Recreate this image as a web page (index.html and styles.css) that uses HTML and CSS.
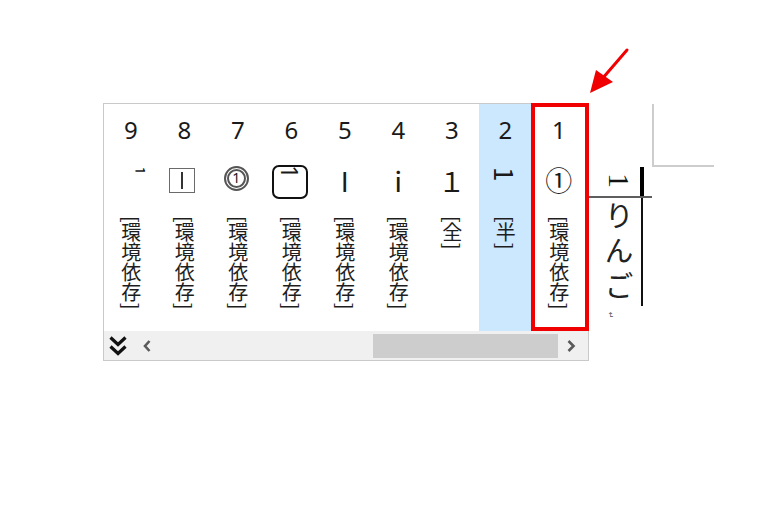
FILE: index.html
```html
<!DOCTYPE html>
<html lang="ja">
<head>
<meta charset="utf-8">
<title>IME候補ウィンドウ</title>
<link rel="stylesheet" href="styles.css">
</head>
<body>
<div class="screen">
  <div class="ime">
    <div class="cands">
      <div class="cand">
        <div class="num">9</div>
        <div class="glyph"><span class="rot g-sup">¹</span></div>
        <div class="note">[環境依存]</div>
      </div>
      <div class="cand">
        <div class="num">8</div>
        <div class="glyph"><span class="g-box"><span class="g-box-bar"></span></span></div>
        <div class="note">[環境依存]</div>
      </div>
      <div class="cand">
        <div class="num">7</div>
        <div class="glyph"><span class="g-dcircle">1</span></div>
        <div class="note">[環境依存]</div>
      </div>
      <div class="cand">
        <div class="num">6</div>
        <div class="glyph"><span class="g-key"><span class="rot g-key-one">1</span></span></div>
        <div class="note">[環境依存]</div>
      </div>
      <div class="cand">
        <div class="num">5</div>
        <div class="glyph"><span class="g-roman">Ⅰ</span></div>
        <div class="note">[環境依存]</div>
      </div>
      <div class="cand">
        <div class="num">4</div>
        <div class="glyph"><span class="g-roman">ⅰ</span></div>
        <div class="note">[環境依存]</div>
      </div>
      <div class="cand">
        <div class="num">3</div>
        <div class="glyph"><span class="g-full">１</span></div>
        <div class="note">[全]</div>
      </div>
      <div class="cand sel">
        <div class="num">2</div>
        <div class="glyph"><span class="rot g-half">1</span></div>
        <div class="note">[半]</div>
      </div>
      <div class="cand">
        <div class="num">1</div>
        <div class="glyph"><span class="g-circle">①</span></div>
        <div class="note">[環境依存]</div>
      </div>
    </div>
    <div class="scroll">
      <svg class="dbl" viewBox="0 0 20 22" width="20" height="22" aria-hidden="true">
        <path d="M2.5 2.5 L10 9.5 L17.5 2.5" fill="none" stroke="#111" stroke-width="3.2"/>
        <path d="M2.5 11.5 L10 18.5 L17.5 11.5" fill="none" stroke="#111" stroke-width="3.2"/>
      </svg>
      <svg class="arr-l" viewBox="0 0 8 12" width="8" height="12" aria-hidden="true">
        <path d="M6.5 1 L2 6 L6.5 11" fill="none" stroke="#5a5a5a" stroke-width="2.6"/>
      </svg>
      <div class="track"><div class="thumb"></div></div>
      <svg class="arr-r" viewBox="0 0 10 12" width="10" height="12" aria-hidden="true">
        <path d="M2.5 1 L7.5 6 L2.5 11" fill="none" stroke="#5a5a5a" stroke-width="2.6"/>
      </svg>
    </div>
    <div class="redbox"></div>
  </div>

  <div class="doc">
    <div class="corner"></div>
    <div class="head">
      <span class="one">1</span>
      <span class="caret"></span>
    </div>
    <div class="rule"></div>
    <div class="body">
      <span class="ringo">りんご</span>
      <span class="uline"></span>
    </div>
    <div class="para">↵</div>
  </div>

  <svg class="arrow" viewBox="0 0 50 55" width="50" height="55" aria-hidden="true">
    <line x1="42" y1="5" x2="17" y2="34" stroke="#f00000" stroke-width="3" stroke-linecap="round"/>
    <polygon points="5,48 11,25 28,37" fill="#f00000"/>
  </svg>
</div>
</body>
</html>
```
FILE: styles.css
```css
html, body {
  margin: 0;
  padding: 0;
  background: #fff;
}

body {
  font-family: "Noto Sans", "Noto Sans CJK JP", sans-serif;
  color: #1a1a1a;
}

.screen {
  position: relative;
  width: 779px;
  height: 518px;
  box-sizing: border-box;
  padding: 103px 0 0 103px;
  display: flex;
  align-items: flex-start;
  overflow: hidden;
}

/* ---------- candidate window ---------- */
.ime {
  position: relative;
  width: 486px;
  height: 258px;
  box-sizing: border-box;
  border: 1px solid #c9c9c9;
  background: #fff;
  display: flex;
  flex-direction: column;
  flex: none;
}

.cands {
  display: grid;
  grid-template-columns: repeat(9, 53.5px);
  height: 227px;
}

.cand {
  display: flex;
  flex-direction: column;
  align-items: center;
}

.cand.sel {
  background: #cce8ff;
}

.num {
  margin-top: 14px;
  height: 24px;
  line-height: 24px;
  font-size: 24px;
  color: #1a1a1a;
}

.glyph {
  margin-top: 15px;
  height: 44px;
  width: 100%;
  display: flex;
  align-items: center;
  justify-content: center;
  font-family: "Noto Sans CJK JP", sans-serif;
  font-size: 27px;
  line-height: 1;
  color: #1a1a1a;
}

.rot {
  writing-mode: vertical-rl;
  text-orientation: mixed;
}

.g-sup {
  font-size: 22px;
  margin: 0 0 16px 10px;
}

.g-box {
  width: 26px;
  height: 25px;
  box-sizing: border-box;
  border: 1px solid #6a6a6a;
  display: flex;
  align-items: center;
  justify-content: center;
  margin: 3px 0 0 -4px;
}

.g-box-bar {
  width: 2px;
  height: 17px;
  background: #333;
}

.g-dcircle {
  width: 25px;
  height: 25px;
  box-sizing: border-box;
  border: 5px double #555;
  border-radius: 50%;
  display: flex;
  align-items: center;
  justify-content: center;
  font-family: "Noto Sans", sans-serif;
  font-size: 14px;
  line-height: 1;
  margin: -2px 0 0 -3px;
}

.g-key {
  width: 36px;
  height: 34px;
  box-sizing: border-box;
  border: 2.5px solid #111;
  border-radius: 7px;
  display: flex;
  justify-content: center;
  align-items: flex-start;
  margin: 5px 0 0 -3px;
}

.g-key-one {
  font-family: "Noto Sans", sans-serif;
  font-size: 24px;
  line-height: 24px;
  margin-top: -2px;
}

.g-roman {
  margin-top: 2px;
}

.g-full {
  margin-top: 2px;
}

.g-half {
  font-size: 26px;
  margin-bottom: 10px;
}

.g-circle {
  font-size: 27px;
}

.note {
  margin-top: 15px;
  writing-mode: vertical-rl;
  text-orientation: mixed;
  font-family: "Noto Sans CJK JP", sans-serif;
  font-size: 20px;
  line-height: 20px;
  color: #1e1e1e;
}

.scroll {
  height: 29px;
  background: #f0f0f0;
  display: flex;
  align-items: center;
  padding-left: 4px;
}

.dbl {
  display: block;
  flex: none;
}

.arr-l {
  display: block;
  flex: none;
  margin-left: 15px;
}

.track {
  flex: 1;
  height: 100%;
  display: flex;
  align-items: center;
  justify-content: flex-end;
}

.thumb {
  width: 185px;
  height: 24px;
  background: #cdcdcd;
}

.arr-r {
  display: block;
  flex: none;
  margin: 0 12px 0 8px;
}

.redbox {
  position: absolute;
  left: 427px;
  top: -1px;
  width: 58px;
  height: 228px;
  box-sizing: border-box;
  border: 4px solid #f00000;
}

/* ---------- document area ---------- */
.doc {
  width: 190px;
  display: flex;
  flex-direction: column;
  align-items: flex-start;
  flex: none;
}

.corner {
  margin: 1px 0 0 63px;
  width: 62px;
  height: 63px;
  box-sizing: border-box;
  border-left: 2px solid #cdcdcd;
  border-bottom: 2px solid #cdcdcd;
}

.head {
  width: 63px;
  height: 29px;
  display: flex;
  justify-content: flex-end;
  align-items: stretch;
}

.one {
  writing-mode: vertical-rl;
  text-orientation: mixed;
  font-family: "Liberation Serif", serif;
  font-size: 30px;
  line-height: 30px;
  color: #111;
  margin: 6px 6px 0 0;
}

.caret {
  width: 4px;
  background: #000;
  margin-right: 8px;
}

.rule {
  width: 63px;
  height: 2px;
  background: #5e5e5e;
}

.body {
  width: 63px;
  display: flex;
}

.ringo {
  writing-mode: vertical-rl;
  font-family: "Noto Sans CJK JP", sans-serif;
  font-size: 29px;
  line-height: 30px;
  letter-spacing: 6px;
  color: #222;
  margin: 3px 0 0 15px;
}

.uline {
  width: 2px;
  height: 108px;
  background: #111;
  margin: 0 9px 0 auto;
}

.para {
  writing-mode: vertical-rl;
  text-orientation: sideways;
  font-family: "DejaVu Sans", sans-serif;
  font-size: 8px;
  line-height: 8px;
  color: #555;
  margin: 6px 0 0 17px;
}

.arrow {
  position: absolute;
  left: 585px;
  top: 45px;
}
```
